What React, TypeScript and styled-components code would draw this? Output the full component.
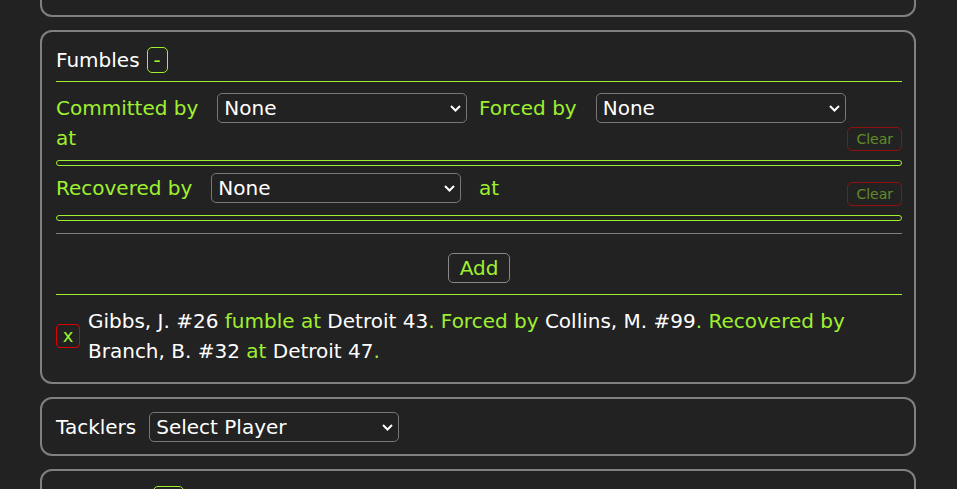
import React from "react";
import styled, { createGlobalStyle } from "styled-components";

const GREEN = "#9ef030";

const Global = createGlobalStyle`
  html, body { margin: 0; padding: 0; background: #222222; }
  body {
    font-family: "DejaVu Sans", Verdana, sans-serif;
    font-size: 20px;
    line-height: 30px;
    color: #ffffff;
    overflow: hidden;
  }
`;

const Page = styled.div`
  display: flex;
  flex-direction: column;
  gap: 13px;
  padding: 0 41px 0 40px;
`;

const Panel = styled.section<{ $clip?: boolean }>`
  box-sizing: border-box;
  border: 2px solid #808080;
  border-radius: 12px;
  padding: 13px 12px 12px 14px;
  ${(p) => (p.$clip ? "height: 40px; margin-top: -23px;" : "")}
`;

const Header = styled.div`
  display: flex;
  align-items: center;
  gap: 7px;
  height: 30px;
`;

const Title = styled.span`
  color: #ffffff;
`;

const ToggleButton = styled.button`
  box-sizing: border-box;
  height: 26px;
  padding: 0 6px;
  border: 1px solid ${GREEN};
  border-radius: 5px;
  background: transparent;
  color: ${GREEN};
  font: inherit;
  font-size: 20px;
  line-height: 22px;
`;

const Rule = styled.div<{ $color: string; $top: number }>`
  height: 1px;
  background: ${(p) => p.$color};
  margin-top: ${(p) => p.$top}px;
`;

const FieldRow = styled.div<{ $top: number }>`
  display: grid;
  grid-template-columns: 1fr 1fr;
  padding-top: ${(p) => p.$top}px;
`;

const Field = styled.div<{ $row: number; $col: number }>`
  grid-row: ${(p) => p.$row};
  grid-column: ${(p) => p.$col};
  display: flex;
  align-items: center;
  gap: 19px;
  height: 30px;
`;

const Label = styled.span`
  color: ${GREEN};
  white-space: nowrap;
`;

const SelectWrap = styled.div<{ $width: number }>`
  position: relative;
  width: ${(p) => p.$width}px;
  height: 30px;
`;

const Select = styled.select`
  appearance: none;
  box-sizing: border-box;
  width: 100%;
  height: 30px;
  margin: 0;
  padding: 0 26px 0 6px;
  background: #222222;
  color: #ffffff;
  border: 1px solid #777777;
  border-radius: 5px;
  font-family: inherit;
  font-size: 20px;
  outline: none;
`;

const Chevron = styled.svg`
  position: absolute;
  right: 6px;
  top: 12px;
  width: 11px;
  height: 7px;
  pointer-events: none;
`;

const ClearButton = styled.button<{ $row: number; $top: number }>`
  grid-row: ${(p) => p.$row};
  grid-column: 2;
  justify-self: end;
  align-self: start;
  box-sizing: border-box;
  height: 24px;
  margin: ${(p) => p.$top}px 0 9px 0;
  padding: 0 8px;
  border: 1px solid #ff0000;
  border-radius: 5px;
  background: transparent;
  color: ${GREEN};
  opacity: 0.5;
  font-family: inherit;
  font-size: 14px;
  line-height: 22px;
`;

const Bar = styled.div`
  box-sizing: border-box;
  height: 6px;
  border: 1px solid ${GREEN};
  border-radius: 3px;
`;

const AddArea = styled.div`
  display: flex;
  justify-content: center;
  padding-top: 19px;
`;

const AddButton = styled.button`
  box-sizing: border-box;
  height: 30px;
  padding: 0 11px;
  border: 1px solid #888888;
  border-radius: 5px;
  background: transparent;
  color: ${GREEN};
  font-family: inherit;
  font-size: 20px;
  line-height: 28px;
`;

const Entry = styled.div`
  display: flex;
  align-items: center;
  gap: 8px;
  padding: 11px 0 4px;
`;

const RemoveButton = styled.button`
  flex: none;
  box-sizing: border-box;
  width: 24px;
  height: 24px;
  padding: 0;
  border: 1px solid #dd0000;
  border-radius: 4px;
  background: transparent;
  color: ${GREEN};
  font-family: inherit;
  font-size: 18px;
  line-height: 20px;
`;

const EntryText = styled.div`
  color: #ffffff;
  line-height: 30px;
`;

const G = styled.span`
  color: ${GREEN};
`;

const TacklerRow = styled.div`
  display: flex;
  align-items: center;
  gap: 13px;
  height: 30px;
`;

function PlayerSelect({ value, width = 250 }: { value: string; width?: number }) {
  return (
    <SelectWrap $width={width}>
      <Select defaultValue={value}>
        <option>{value}</option>
      </Select>
      <Chevron viewBox="0 0 11 7">
        <path d="M1 1 L5.5 5.5 L10 1" fill="none" stroke="#ffffff" strokeWidth="2" />
      </Chevron>
    </SelectWrap>
  );
}

export default function App() {
  return (
    <>
      <Global />
      <Page>
        <Panel $clip />
        <Panel>
          <Header>
            <Title>Fumbles</Title>
            <ToggleButton>-</ToggleButton>
          </Header>
          <Rule $color={GREEN} $top={6} />
          <FieldRow $top={11}>
            <Field $row={1} $col={1}>
              <Label>Committed by</Label>
              <PlayerSelect value="None" />
            </Field>
            <Field $row={1} $col={2}>
              <Label>Forced by</Label>
              <PlayerSelect value="None" />
            </Field>
            <Field $row={2} $col={1}>
              <Label>at</Label>
            </Field>
            <ClearButton $row={2} $top={4}>Clear</ClearButton>
          </FieldRow>
          <Bar />
          <FieldRow $top={7}>
            <Field $row={1} $col={1}>
              <Label>Recovered by</Label>
              <PlayerSelect value="None" />
            </Field>
            <Field $row={1} $col={2}>
              <Label>at</Label>
            </Field>
            <ClearButton $row={1} $top={9}>Clear</ClearButton>
          </FieldRow>
          <Bar />
          <Rule $color="#808080" $top={12} />
          <AddArea>
            <AddButton>Add</AddButton>
          </AddArea>
          <Rule $color={GREEN} $top={11} />
          <Entry>
            <RemoveButton>x</RemoveButton>
            <EntryText>
              Gibbs, J. #26 <G>fumble at</G> Detroit 43<G>. Forced by</G> Collins, M. #99<G>. Recovered by</G>{" "}
              Branch, B. #32 <G>at</G> Detroit 47<G>.</G>
            </EntryText>
          </Entry>
        </Panel>
        <Panel>
          <TacklerRow>
            <Title>Tacklers</Title>
            <PlayerSelect value="Select Player" />
          </TacklerRow>
        </Panel>
        <Panel>
          <Header>
            <Title>Penalties</Title>
            <ToggleButton>+</ToggleButton>
          </Header>
        </Panel>
      </Page>
    </>
  );
}
